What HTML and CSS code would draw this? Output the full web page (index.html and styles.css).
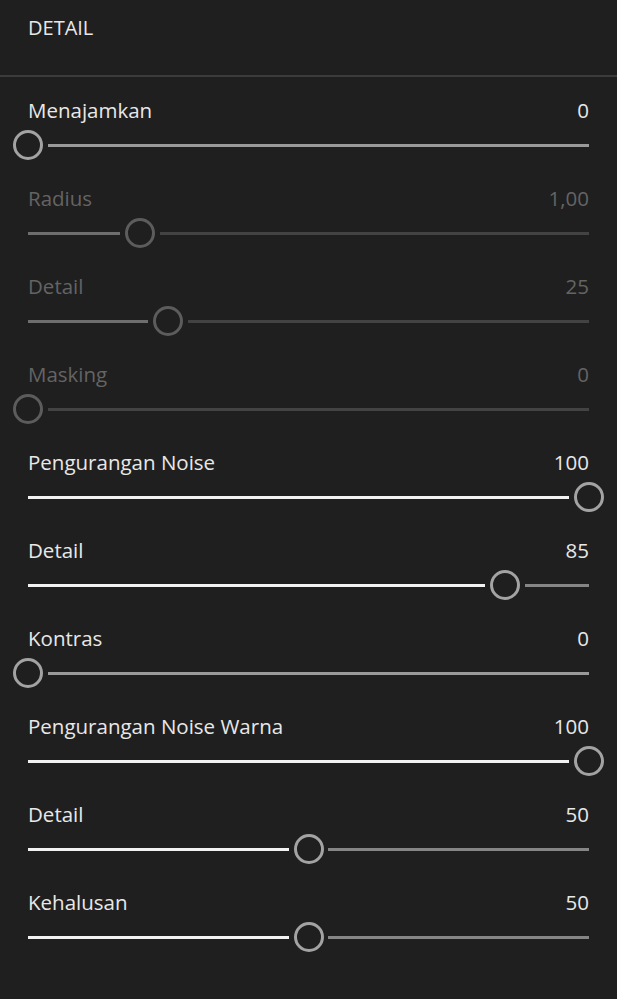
FILE: index.html
```html
<!DOCTYPE html>
<html lang="id">
  <head>
    <meta charset="UTF-8">
    <title>Detail</title>
    <link rel="stylesheet" href="styles.css">
  </head>
  <body>

    <div class="panel">
      <div class="panel-head">DETAIL</div>

      <div class="row">
        <div class="label"><span>Menajamkan</span><span>0</span></div>
        <div class="slider zero" style="--p: 0"><div class="thumb"></div></div>
      </div>

      <div class="row off">
        <div class="label"><span>Radius</span><span>1,00</span></div>
        <div class="slider" style="--p: 0.2"><div class="thumb"></div></div>
      </div>

      <div class="row off">
        <div class="label"><span>Detail</span><span>25</span></div>
        <div class="slider" style="--p: 0.25"><div class="thumb"></div></div>
      </div>

      <div class="row off">
        <div class="label"><span>Masking</span><span>0</span></div>
        <div class="slider" style="--p: 0"><div class="thumb"></div></div>
      </div>

      <div class="row">
        <div class="label"><span>Pengurangan Noise</span><span>100</span></div>
        <div class="slider" style="--p: 1"><div class="thumb"></div></div>
      </div>

      <div class="row">
        <div class="label"><span>Detail</span><span>85</span></div>
        <div class="slider" style="--p: 0.85"><div class="thumb"></div></div>
      </div>

      <div class="row">
        <div class="label"><span>Kontras</span><span>0</span></div>
        <div class="slider zero" style="--p: 0"><div class="thumb"></div></div>
      </div>

      <div class="row">
        <div class="label"><span>Pengurangan Noise Warna</span><span>100</span></div>
        <div class="slider" style="--p: 1"><div class="thumb"></div></div>
      </div>

      <div class="row">
        <div class="label"><span>Detail</span><span>50</span></div>
        <div class="slider" style="--p: 0.5"><div class="thumb"></div></div>
      </div>

      <div class="row">
        <div class="label"><span>Kehalusan</span><span>50</span></div>
        <div class="slider" style="--p: 0.5"><div class="thumb"></div></div>
      </div>
    </div>

  </body>
</html>
```

FILE: styles.css
```css
* {
  box-sizing: border-box;
  margin: 0;
  padding: 0;
}

html, body {
  background-color: #1f1f1f;
}

body {
  font-family: "Open Sans", "Noto Sans", sans-serif;
  color: #e8e8e8;
  height: 999px;
  overflow: hidden;
}

.panel-head {
  height: 77px;
  padding: 16px 28px 0;
  font-size: 20px;
  line-height: 24px;
  border-bottom: 2px solid #3b3b3b;
}

.row {
  height: 88px;
  padding: 21px 28px 0;
}

.label {
  display: flex;
  justify-content: space-between;
  font-size: 20.5px;
  line-height: 24px;
}

/* track is drawn as a gradient, split around the thumb */
.slider {
  --fill: #f2f2f2;
  --rest: #858585;
  --ring: #a3a3a3;
  position: relative;
  height: 30px;
  margin-top: 8px;
  background-image: linear-gradient(to right,
    var(--fill) 0,
    var(--fill) calc(var(--p) * 100% - 20px),
    transparent calc(var(--p) * 100% - 20px),
    transparent calc(var(--p) * 100% + 20px),
    var(--rest) calc(var(--p) * 100% + 20px),
    var(--rest) 100%);
  background-size: 100% 3px;
  background-position: 0 50%;
  background-repeat: no-repeat;
}

.slider.zero {
  --rest: #9a9a9a;
}

.thumb {
  position: absolute;
  top: 0;
  left: calc(var(--p) * 100% - 15px);
  width: 30px;
  height: 30px;
  border: 3px solid var(--ring);
  border-radius: 50%;
  background-color: #1f1f1f;
}

.row.off .label {
  color: #646464;
}

.row.off .slider {
  --fill: #6e6e6e;
  --rest: #434343;
  --ring: #5c5c5c;
}
```
